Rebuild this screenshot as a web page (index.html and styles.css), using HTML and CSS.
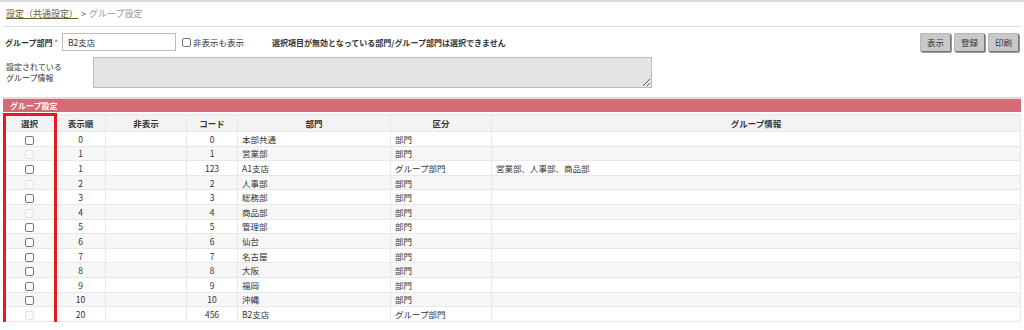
FILE: index.html
```html
<!DOCTYPE html>
<html lang="ja">
<head>
    <meta charset="UTF-8">
    <meta name="viewport" content="width=device-width, initial-scale=1.0">
    <title>グループ設定</title>
    <link rel="stylesheet" href="styles.css">
</head>
<body>
    <div class="page">
        <div class="crumbs">
            <a href="#" class="crumb-link">設定（共通設定）</a>
            <span class="crumb-sep">&gt;</span>
            <span class="crumb-current">グループ設定</span>
        </div>

        <div class="toolbar">
            <label class="field-label" for="group-dept">グループ部門 <span class="req">*</span></label>
            <input type="text" id="group-dept" class="text-input" value="B2支店">
            <label class="check-label"><input type="checkbox" class="cb"> 非表示も表示</label>
            <span class="notice">選択項目が無効となっている部門/グループ部門は選択できません</span>
            <div class="buttons">
                <button type="button">表示</button>
                <button type="button">登録</button>
                <button type="button">印刷</button>
            </div>
        </div>

        <div class="info-row">
            <div class="info-label">設定されている<br>グループ情報</div>
            <textarea class="info-box" disabled></textarea>
        </div>

        <div class="section">
            <div class="section-title">グループ設定</div>
            <div class="table-wrap">
                <table class="group-table">
                    <colgroup>
                        <col style="width:52px">
                        <col style="width:50px">
                        <col style="width:81px">
                        <col style="width:51px">
                        <col style="width:153px">
                        <col style="width:101px">
                        <col>
                    </colgroup>
                    <thead>
                        <tr>
                            <th>選択</th>
                            <th>表示順</th>
                            <th>非表示</th>
                            <th>コード</th>
                            <th>部門</th>
                            <th>区分</th>
                            <th>グループ情報</th>
                        </tr>
                    </thead>
                    <tbody>
                        <tr><td class="c"><input type="checkbox" class="cb"></td><td class="c">0</td><td></td><td class="c">0</td><td>本部共通</td><td>部門</td><td></td></tr>
                        <tr><td class="c"><input type="checkbox" class="cb" disabled></td><td class="c">1</td><td></td><td class="c">1</td><td>営業部</td><td>部門</td><td></td></tr>
                        <tr><td class="c"><input type="checkbox" class="cb"></td><td class="c">1</td><td></td><td class="c">123</td><td>A1支店</td><td>グループ部門</td><td>営業部、人事部、商品部</td></tr>
                        <tr><td class="c"><input type="checkbox" class="cb" disabled></td><td class="c">2</td><td></td><td class="c">2</td><td>人事部</td><td>部門</td><td></td></tr>
                        <tr><td class="c"><input type="checkbox" class="cb"></td><td class="c">3</td><td></td><td class="c">3</td><td>総務部</td><td>部門</td><td></td></tr>
                        <tr><td class="c"><input type="checkbox" class="cb" disabled></td><td class="c">4</td><td></td><td class="c">4</td><td>商品部</td><td>部門</td><td></td></tr>
                        <tr><td class="c"><input type="checkbox" class="cb"></td><td class="c">5</td><td></td><td class="c">5</td><td>管理部</td><td>部門</td><td></td></tr>
                        <tr><td class="c"><input type="checkbox" class="cb"></td><td class="c">6</td><td></td><td class="c">6</td><td>仙台</td><td>部門</td><td></td></tr>
                        <tr><td class="c"><input type="checkbox" class="cb"></td><td class="c">7</td><td></td><td class="c">7</td><td>名古屋</td><td>部門</td><td></td></tr>
                        <tr><td class="c"><input type="checkbox" class="cb"></td><td class="c">8</td><td></td><td class="c">8</td><td>大阪</td><td>部門</td><td></td></tr>
                        <tr><td class="c"><input type="checkbox" class="cb"></td><td class="c">9</td><td></td><td class="c">9</td><td>福岡</td><td>部門</td><td></td></tr>
                        <tr><td class="c"><input type="checkbox" class="cb"></td><td class="c">10</td><td></td><td class="c">10</td><td>沖縄</td><td>部門</td><td></td></tr>
                        <tr><td class="c"><input type="checkbox" class="cb" disabled></td><td class="c">20</td><td></td><td class="c">456</td><td>B2支店</td><td>グループ部門</td><td></td></tr>
                    </tbody>
                </table>
                <div class="select-highlight"></div>
            </div>
        </div>
    </div>
</body>
</html>
```

FILE: styles.css
```css
body {
    margin: 0;
    font-family: "Noto Sans CJK JP", "Noto Sans", sans-serif;
    font-size: 8px;
    color: #333;
    background: #fff;
}
.page {
    border-top: 2px solid #dcdcdc;
}
.crumbs {
    margin: 0 3px;
    padding: 5px 3px 0;
    height: 25px;
    box-sizing: border-box;
    line-height: 14px;
    border-bottom: 1px solid #dcdcdc;
    font-size: 9px;
}
.crumb-link {
    color: #6e5d2c;
    text-decoration: underline;
}
.crumb-sep {
    color: #555;
    margin: 0 1px;
}
.crumb-current {
    color: #999;
}
.toolbar {
    display: flex;
    align-items: center;
    height: 20px;
    margin-top: 5px;
    padding: 0 5px;
}
.field-label {
    font-weight: bold;
    width: 57px;
    white-space: nowrap;
}
.req {
    color: #e03030;
    font-weight: normal;
}
.text-input {
    width: 114px;
    height: 18px;
    box-sizing: border-box;
    border: 1px solid #bcbcbc;
    padding: 0 5px;
    font: inherit;
    font-size: 8.5px;
    color: #333;
}
.check-label {
    display: flex;
    align-items: center;
    gap: 2px;
    margin-left: 6px;
    width: 90px;
    font-size: 8.5px;
}
.notice {
    font-weight: bold;
}
.buttons {
    margin-left: auto;
    display: flex;
    gap: 3px;
}
.buttons button {
    width: 31px;
    height: 19px;
    padding: 0;
    font: inherit;
    font-size: 8.5px;
    color: #333;
    background: #c9c9c9;
    border: 1px solid #b5b5b5;
    border-right-color: #777;
    border-bottom-color: #777;
    border-radius: 2px;
    box-shadow: 1px 1px 0 #999;
}
.cb {
    appearance: none;
    width: 9px;
    height: 9px;
    margin: 0;
    border: 1px solid #777;
    border-radius: 2px;
    background: #fff;
    vertical-align: middle;
}
.cb:disabled {
    border-color: #e2e2e2;
    background: #fafafa;
}
.info-row {
    display: flex;
    margin-top: 5px;
    padding-left: 6px;
}
.info-label {
    width: 87px;
    padding-top: 4px;
    line-height: 11px;
}
.info-box {
    width: 559px;
    height: 31px;
    box-sizing: border-box;
    margin: 0;
    border: 1px solid #bcbcbc;
    background: #e4e4e4;
    resize: vertical;
}
.section {
    margin: 9px 3px 0;
    border-top: 2px solid #f2d3d7;
}
.section-title {
    height: 13px;
    line-height: 13px;
    background: #d66b78;
    color: #fff;
    font-weight: bold;
    padding-left: 7px;
}
.table-wrap {
    position: relative;
    margin-top: 2px;
}
.group-table {
    width: 100%;
    table-layout: fixed;
    border-collapse: collapse;
    font-size: 8.5px;
}
.group-table th,
.group-table td {
    border: 1px solid #e8e8e8;
    padding: 0 4px;
    line-height: 12px;
    white-space: nowrap;
    overflow: hidden;
}
.group-table th {
    height: 16px;
    background: #f3f3f3;
    font-weight: bold;
    text-align: center;
}
.group-table tbody tr {
    height: 14.6px;
}
.group-table tbody tr:nth-child(even) {
    background: #f7f7f7;
}
.group-table td.c {
    text-align: center;
}
.select-highlight {
    position: absolute;
    left: 0;
    top: -1px;
    width: 54px;
    height: 215px;
    box-sizing: border-box;
    border: 3px solid #e21b22;
}
```
